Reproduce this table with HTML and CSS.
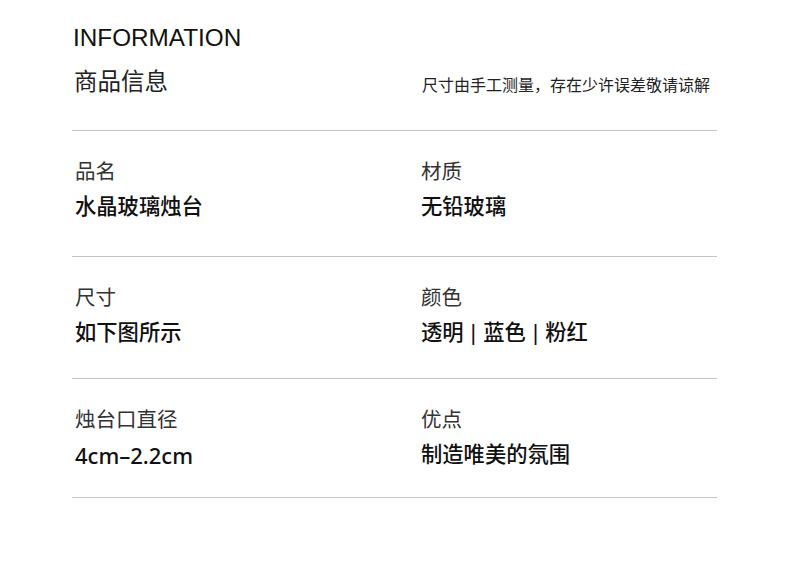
FILE: index.html
```html
<!DOCTYPE html>
<html lang="zh">
<head>
<meta charset="utf-8">
<link rel="stylesheet" href="styles.css">
</head>
<body>
<div class="page">
  <header class="head">
    <h1 class="title">INFORMATION</h1>
    <div class="subhead">
      <h2 class="subtitle">商品信息</h2>
      <p class="note">尺寸由手工测量，存在少许误差敬请谅解</p>
    </div>
  </header>
  <section class="row row-1">
    <div class="cell">
      <div class="label">品名</div>
      <div class="value">水晶玻璃烛台</div>
    </div>
    <div class="cell">
      <div class="label">材质</div>
      <div class="value">无铅玻璃</div>
    </div>
  </section>
  <section class="row row-2">
    <div class="cell">
      <div class="label">尺寸</div>
      <div class="value">如下图所示</div>
    </div>
    <div class="cell">
      <div class="label">颜色</div>
      <div class="value">透明<span class="sep">|</span>蓝色<span class="sep">|</span>粉红</div>
    </div>
  </section>
  <section class="row row-3">
    <div class="cell">
      <div class="label">烛台口直径</div>
      <div class="value value-latin">4cm–2.2cm</div>
    </div>
    <div class="cell">
      <div class="label">优点</div>
      <div class="value">制造唯美的氛围</div>
    </div>
  </section>
</div>
</body>
</html>
```
FILE: styles.css
```css
html, body {
  margin: 0;
  padding: 0;
  background: #ffffff;
}
body {
  font-family: "Liberation Sans", "Noto Sans CJK SC", sans-serif;
  color: #1a1a1a;
}
.page {
  width: 645px;
  margin-left: 72px;
}
.head {
  padding-top: 23px;
  padding-bottom: 33px;
  border-bottom: 1px solid #c4c4c4;
}
.title {
  margin: 0;
  padding-left: 1px;
  font-size: 24.3px;
  line-height: 30px;
  font-weight: normal;
  color: #111;
}
.subhead {
  margin-top: 14px;
  display: flex;
  justify-content: space-between;
  align-items: flex-end;
}
.subtitle {
  margin: 0;
  padding-left: 2px;
  font-size: 23.5px;
  line-height: 30px;
  font-weight: normal;
  color: #222;
}
.note {
  margin: 0 7px 0 0;
  font-size: 16px;
  line-height: 22px;
  color: #222;
}
.row {
  display: grid;
  grid-template-columns: 348px 1fr;
  padding-top: 26px;
  border-bottom: 1px solid #c4c4c4;
}
.row-1 { padding-bottom: 34px; }
.row-2 { padding-bottom: 30px; }
.row-3 { padding-bottom: 27px; }
.cell {
  padding-left: 3px;
}
.cell + .cell {
  padding-left: 1px;
}
.label {
  font-size: 20.5px;
  line-height: 30px;
  color: #333;
}
.value {
  margin-top: 5px;
  font-size: 21.3px;
  line-height: 30px;
  font-weight: 500;
  color: #111;
}
.value-latin {
  font-family: "Noto Sans", "Noto Sans CJK SC", sans-serif;
  font-size: 22px;
}
.sep {
  margin: 0 7px;
  font-weight: normal;
}
```
